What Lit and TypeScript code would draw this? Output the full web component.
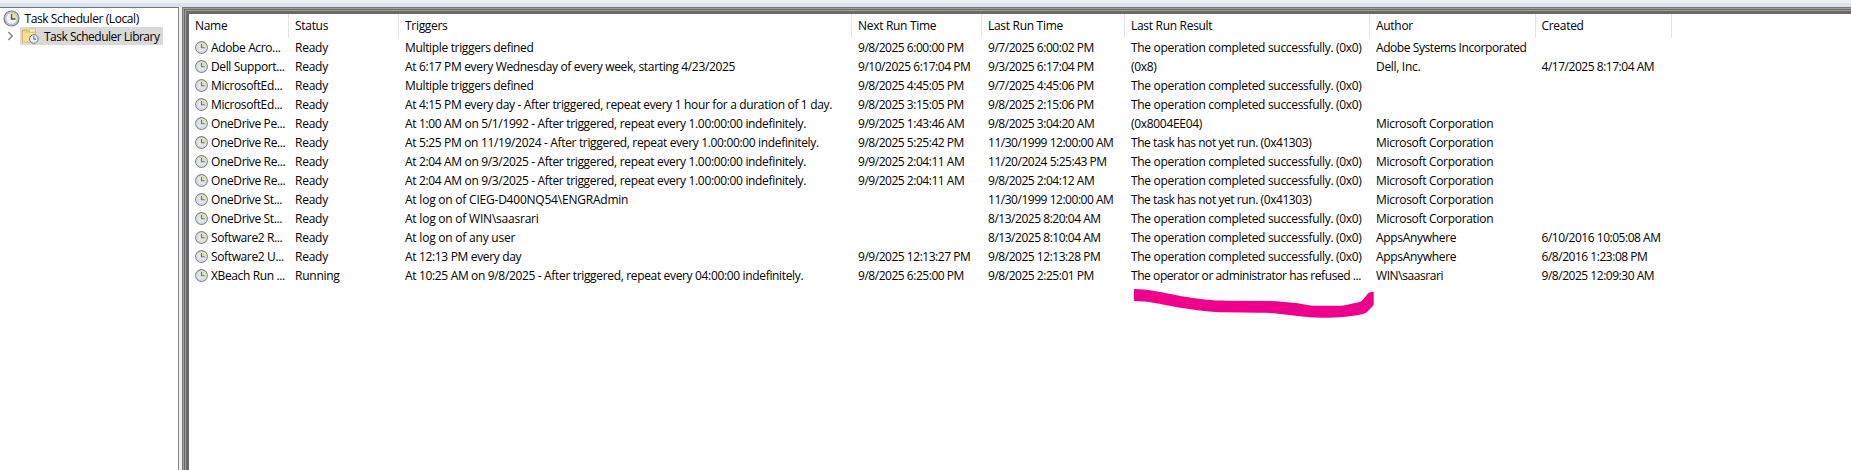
import { LitElement, html, css } from "lit";
import { customElement } from "lit/decorators.js";

const HEAD = ["Name", "Status", "Triggers", "Next Run Time", "Last Run Time", "Last Run Result", "Author", "Created"];
const OK = "The operation completed successfully. (0x0)";
const NOT_RUN = "The task has not yet run. (0x41303)";
const MS = "Microsoft Corporation";

const ROWS: string[][] = [
  ["Adobe Acro...", "Ready", "Multiple triggers defined", "9/8/2025 6:00:00 PM", "9/7/2025 6:00:02 PM", OK, "Adobe Systems Incorporated", ""],
  ["Dell Support...", "Ready", "At 6:17 PM every Wednesday of every week, starting 4/23/2025", "9/10/2025 6:17:04 PM", "9/3/2025 6:17:04 PM", "(0x8)", "Dell, Inc.", "4/17/2025 8:17:04 AM"],
  ["MicrosoftEd...", "Ready", "Multiple triggers defined", "9/8/2025 4:45:05 PM", "9/7/2025 4:45:06 PM", OK, "", ""],
  ["MicrosoftEd...", "Ready", "At 4:15 PM every day - After triggered, repeat every 1 hour for a duration of 1 day.", "9/8/2025 3:15:05 PM", "9/8/2025 2:15:06 PM", OK, "", ""],
  ["OneDrive Pe...", "Ready", "At 1:00 AM on 5/1/1992 - After triggered, repeat every 1.00:00:00 indefinitely.", "9/9/2025 1:43:46 AM", "9/8/2025 3:04:20 AM", "(0x8004EE04)", MS, ""],
  ["OneDrive Re...", "Ready", "At 5:25 PM on 11/19/2024 - After triggered, repeat every 1.00:00:00 indefinitely.", "9/8/2025 5:25:42 PM", "11/30/1999 12:00:00 AM", NOT_RUN, MS, ""],
  ["OneDrive Re...", "Ready", "At 2:04 AM on 9/3/2025 - After triggered, repeat every 1.00:00:00 indefinitely.", "9/9/2025 2:04:11 AM", "11/20/2024 5:25:43 PM", OK, MS, ""],
  ["OneDrive Re...", "Ready", "At 2:04 AM on 9/3/2025 - After triggered, repeat every 1.00:00:00 indefinitely.", "9/9/2025 2:04:11 AM", "9/8/2025 2:04:12 AM", OK, MS, ""],
  ["OneDrive St...", "Ready", "At log on of CIEG-D400NQ54\\ENGRAdmin", "", "11/30/1999 12:00:00 AM", NOT_RUN, MS, ""],
  ["OneDrive St...", "Ready", "At log on of WIN\\saasrari", "", "8/13/2025 8:20:04 AM", OK, MS, ""],
  ["Software2 R...", "Ready", "At log on of any user", "", "8/13/2025 8:10:04 AM", OK, "AppsAnywhere", "6/10/2016 10:05:08 AM"],
  ["Software2 U...", "Ready", "At 12:13 PM every day", "9/9/2025 12:13:27 PM", "9/8/2025 12:13:28 PM", OK, "AppsAnywhere", "6/8/2016 1:23:08 PM"],
  ["XBeach Run ...", "Running", "At 10:25 AM on 9/8/2025 - After triggered, repeat every 04:00:00 indefinitely.", "9/8/2025 6:25:00 PM", "9/8/2025 2:25:01 PM", "The operator or administrator has refused ...", "WIN\\saasrari", "9/8/2025 12:09:30 AM"],
];

// Dense or loose tracking for strings that differ from their column's default.
const tracking = (t: string): string =>
  t === NOT_RUN || t.startsWith("The operator") || t.startsWith("Adobe Sys") || t === "WIN\\saasrari" ? "tight"
  : t.startsWith("At log on") ? "loose" : "";

const clock = html`<svg class="clock" viewBox="0 0 13 13">
  <circle cx="6.5" cy="6.5" r="5.9" fill="#f0f1f3" stroke="#868686" stroke-width="1.1"/>
  <circle cx="6.5" cy="6.5" r="4.6" fill="#dfe5f1" stroke="#c4c8d0" stroke-width=".6"/>
  <path d="M6.5 6.5V2A4.5 4.5 0 0 1 11 6.5z" fill="#dde79c"/>
  <path d="M6.5 3v3.7h3.2" fill="none" stroke="#69717d" stroke-width="1.1"/>
</svg>`;

@customElement("app-root")
export class AppRoot extends LitElement {
  static styles = css`
    :host { display: block; height: 470px; overflow: hidden; background: #f0f0f0; color: #000; font: 12px/19px "Open Sans", sans-serif; }
    .strip { height: 3px; background: #f0f0f2; }
    .band { height: 4px; background: #d9e3ef; }
    .main { display: flex; height: 463px; overflow: hidden; }
    .tree { box-sizing: border-box; width: 179px; flex: none; border-top: 1px solid #6f747c; border-right: 1px solid #828790; background: #fff; margin-right: 3px; padding-top: 1px; }
    .item { display: flex; align-items: center; height: 18px; white-space: pre; }
    .root { padding-left: 3px; letter-spacing: -0.41px; }
    .root svg { width: 17px; height: 17px; margin-right: 4.5px; }
    .lib { padding-left: 7px; letter-spacing: -0.5px; }
    .chev { width: 7px; height: 10px; margin-right: 6px; }
    .sel { display: flex; align-items: center; height: 18px; width: 143px; background: #d9d9d9; border-radius: 1px; }
    .sel svg { width: 17px; height: 16px; margin: 0 5px 0 2px; }
    .frame { flex: 1; box-sizing: border-box; margin-right: -8px; padding: 7px 0 0 7px; background: #fff; position: relative;
      box-shadow: inset 0 0 0 1px #777, inset 0 0 0 2px #a0a0a0, inset 0 0 0 3px #696969, inset 0 0 0 4px #a0a0a0, inset 0 0 0 7px #696969; height: 480px; }
    .grid { display: grid; grid-template-columns: 100px 110px 453px 130px 143px 245px 165.5px 136px; white-space: pre; }
    .h { box-sizing: border-box; height: 24px; line-height: 24px; padding-left: 6px; border-right: 1px solid #e0e4e8; letter-spacing: -0.3px; }
    .c { height: 19px; padding-left: 6px; display: flex; align-items: center; }
    .clock { width: 13px; height: 13px; margin-right: 3px; flex: none; }
    .k0 { letter-spacing: -0.37px; }
    .k1 { letter-spacing: -0.25px; }
    .k2 { letter-spacing: -0.34px; }
    .k3, .k4, .k7 { letter-spacing: -0.47px; }
    .k5, .k6 { letter-spacing: -0.31px; }
    .c .tight { letter-spacing: -0.43px; }
    .c .loose { letter-spacing: -0.22px; }
    .mark { position: absolute; left: 938px; top: 273px; width: 260px; height: 42px; }
  `;

  render() {
    return html`
      <div class="strip"></div><div class="band"></div>
      <div class="main">
        <div class="tree">
          <div class="item root">
            <svg viewBox="0 0 17 17"><circle cx="8.5" cy="8.5" r="7.5" fill="#cfd3d9" stroke="#7c8086" stroke-width="1.2"/><circle cx="8.5" cy="8.5" r="5.8" fill="#eef4fc" stroke="#a2a8b0" stroke-width=".7"/><path d="M8.5 8.5V3A5.5 5.5 0 0 1 14 8.5z" fill="#f5dc85"/><path d="M8.5 4v5h4" fill="none" stroke="#475368" stroke-width="1.3"/></svg>
            <span>Task Scheduler (Local)</span>
          </div>
          <div class="item lib">
            <svg class="chev" viewBox="0 0 7 10"><path d="M1.3 1l4 4-4 4" fill="none" stroke="#858585" stroke-width="1.5"/></svg>
            <div class="sel">
              <svg viewBox="0 0 17 16"><path d="M.5 2h5l1 1.5h7V14H.5z" fill="#f5d177" stroke="#d8a944" stroke-width=".8"/><path d="M7.5 1h6v3h-6z" fill="#fff4d0" stroke="#d8a944" stroke-width=".6"/><path d="M1 5h12v8.6H1z" fill="#fadf8f"/><circle cx="11.8" cy="11" r="4.3" fill="#eef2f6" stroke="#6f7b86"/><path d="M11.8 8.2v3H14" fill="none" stroke="#4c5b6a"/></svg>
              <span>Task Scheduler Library</span>
            </div>
          </div>
        </div>
        <div class="frame">
          <div class="grid">
            ${HEAD.map((t) => html`<div class="h">${t}</div>`)}
            ${ROWS.map((r) => r.map((t, i) => html`<div class="c k${i}">${i === 0 ? clock : ""}<span class=${tracking(t)}>${t}</span></div>`))}
          </div>
          <svg class="mark" viewBox="0 0 260 42"><path fill="#ef008c" d="M14 9C30 9 45 13 60 16C78 19 92 20.7 107 20.7L147 21C158 21 165 22 173 22.7C182 23.5 187 25.7 197 25.7H218C226 25.7 231 23.5 237 22.7C240 22 242 21 243 19.5L248 13.5Q249.500 12 251 12H253.700V25L247 32Q245 34 237 35.300C228 37 217 37.700 207 37.700C190 37.700 178 36 167 34.700C157 33.500 150 32.700 140 32.700L100 32.300C85 31.500 70 29.500 57 27.300C40 24 28 21 14 21Z"/></svg>
        </div>
      </div>`;
  }
}
